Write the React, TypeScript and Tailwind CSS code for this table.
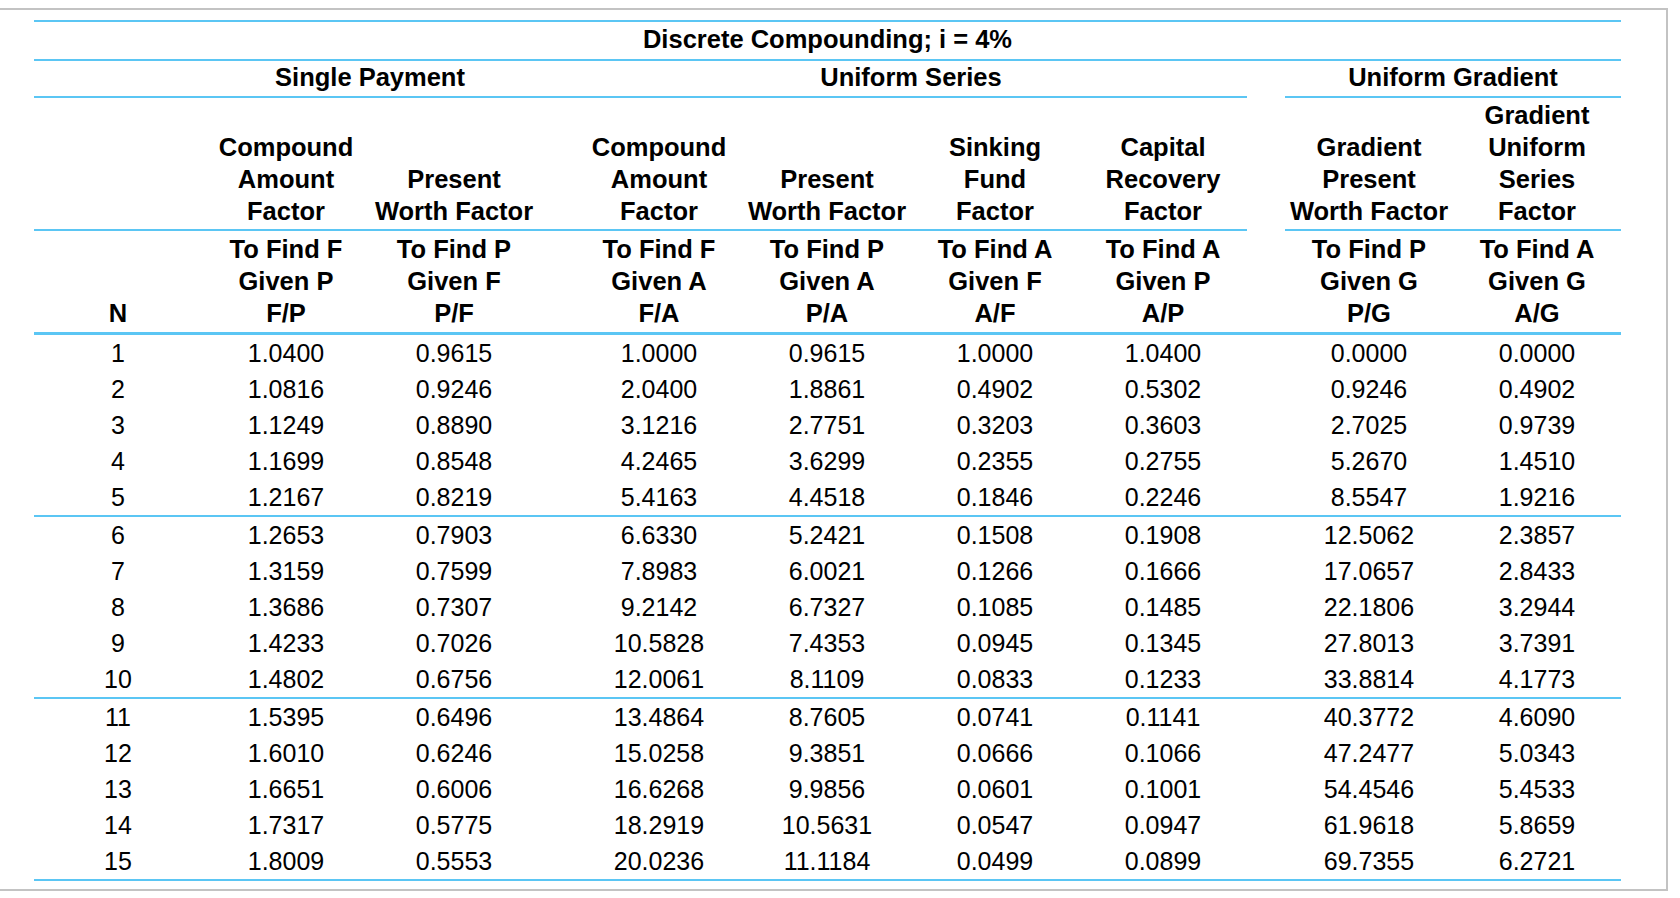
import { Fragment } from "react";

const cols = [
  { name: [] as string[], find: ["N"] },
  { name: ["Compound", "Amount", "Factor"], find: ["To Find F", "Given P", "F/P"] },
  { name: ["Present", "Worth Factor"], find: ["To Find P", "Given F", "P/F"] },
  null,
  { name: ["Compound", "Amount", "Factor"], find: ["To Find F", "Given A", "F/A"] },
  { name: ["Present", "Worth Factor"], find: ["To Find P", "Given A", "P/A"] },
  { name: ["Sinking", "Fund", "Factor"], find: ["To Find A", "Given F", "A/F"] },
  { name: ["Capital", "Recovery", "Factor"], find: ["To Find A", "Given P", "A/P"] },
  null,
  { name: ["Gradient", "Present", "Worth Factor"], find: ["To Find P", "Given G", "P/G"] },
  { name: ["Gradient", "Uniform", "Series", "Factor"], find: ["To Find A", "Given G", "A/G"] },
];

const rows = [
  ["1", "1.0400", "0.9615", "1.0000", "0.9615", "1.0000", "1.0400", "0.0000", "0.0000"],
  ["2", "1.0816", "0.9246", "2.0400", "1.8861", "0.4902", "0.5302", "0.9246", "0.4902"],
  ["3", "1.1249", "0.8890", "3.1216", "2.7751", "0.3203", "0.3603", "2.7025", "0.9739"],
  ["4", "1.1699", "0.8548", "4.2465", "3.6299", "0.2355", "0.2755", "5.2670", "1.4510"],
  ["5", "1.2167", "0.8219", "5.4163", "4.4518", "0.1846", "0.2246", "8.5547", "1.9216"],
  ["6", "1.2653", "0.7903", "6.6330", "5.2421", "0.1508", "0.1908", "12.5062", "2.3857"],
  ["7", "1.3159", "0.7599", "7.8983", "6.0021", "0.1266", "0.1666", "17.0657", "2.8433"],
  ["8", "1.3686", "0.7307", "9.2142", "6.7327", "0.1085", "0.1485", "22.1806", "3.2944"],
  ["9", "1.4233", "0.7026", "10.5828", "7.4353", "0.0945", "0.1345", "27.8013", "3.7391"],
  ["10", "1.4802", "0.6756", "12.0061", "8.1109", "0.0833", "0.1233", "33.8814", "4.1773"],
  ["11", "1.5395", "0.6496", "13.4864", "8.7605", "0.0741", "0.1141", "40.3772", "4.6090"],
  ["12", "1.6010", "0.6246", "15.0258", "9.3851", "0.0666", "0.1066", "47.2477", "5.0343"],
  ["13", "1.6651", "0.6006", "16.6268", "9.9856", "0.0601", "0.1001", "54.4546", "5.4533"],
  ["14", "1.7317", "0.5775", "18.2919", "10.5631", "0.0547", "0.0947", "61.9618", "5.8659"],
  ["15", "1.8009", "0.5553", "20.0236", "11.1184", "0.0499", "0.0899", "69.7355", "6.2721"],
];

function Line({ thick }: { thick?: boolean }) {
  return <div className={`col-span-11 bg-[#5bc6f4] ${thick ? "h-[3px]" : "h-[2px]"}`} />;
}

// the two header rules break over the gap before Uniform Gradient
function SplitLine() {
  return (
    <>
      <div className="col-span-8 h-[2px] bg-[#5bc6f4]" />
      <div />
      <div className="col-span-2 h-[2px] bg-[#5bc6f4]" />
    </>
  );
}

export default function App() {
  return (
    <div className="h-[898px] w-[1680px] overflow-hidden bg-white pt-[8px] font-['Liberation_Sans',Arial,sans-serif] text-black">
      <div className="ml-[-4px] h-[883px] w-[1672px] border-2 border-[#c3c3c3] pl-[36px] pt-[10px]">
        <div className="grid grid-cols-[168px_168px_168px_37px_168px_168px_168px_168px_38px_168px_168px]">
          <Line />
          <div className="col-span-11 h-[37px] pt-[1px] text-center text-[25.5px] font-bold leading-[32px]">
            Discrete Compounding; i = 4%
          </div>
          <Line />
          <div className="h-[35px]" />
          <div className="col-span-2 text-center text-[25.5px] font-bold leading-[32px]">Single Payment</div>
          <div />
          <div className="col-span-4 text-center text-[25.5px] font-bold leading-[32px]">Uniform Series</div>
          <div />
          <div className="col-span-2 text-center text-[25.5px] font-bold leading-[32px]">Uniform Gradient</div>
          <SplitLine />
          {cols.map((c, i) => (
            <div
              key={`n${i}`}
              className="flex h-[131px] flex-col justify-end pb-[2px] text-center text-[25.5px] font-bold leading-[32px]"
            >
              {c?.name.map((t) => (
                <div key={t} className="whitespace-nowrap">
                  {t}
                </div>
              ))}
            </div>
          ))}
          <SplitLine />
          {cols.map((c, i) => (
            <div
              key={`f${i}`}
              className="flex h-[101px] flex-col justify-end pb-[3px] text-center text-[25.5px] font-bold leading-[32px]"
            >
              {c?.find.map((t) => (
                <div key={t} className="whitespace-nowrap">
                  {t}
                </div>
              ))}
            </div>
          ))}
          <Line thick />
          {rows.map((r, ri) => (
            <Fragment key={r[0]}>
              {r.map((v, ci) => (
                <Fragment key={ci}>
                  <div className="h-[36px] text-center text-[25px] leading-[36px]">{v}</div>
                  {(ci === 2 || ci === 6) && <div />}
                </Fragment>
              ))}
              {ri % 5 === 4 && <Line />}
            </Fragment>
          ))}
        </div>
      </div>
    </div>
  );
}
